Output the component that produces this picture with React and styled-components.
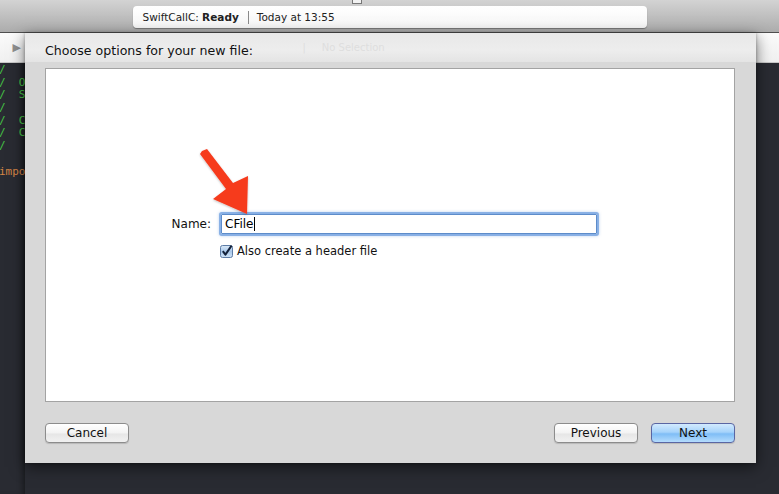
import React from 'react';
import styled, { createGlobalStyle } from 'styled-components';

const GlobalStyle = createGlobalStyle`
  html, body {
    margin: 0;
    padding: 0;
    background: #292b32;
  }
  body {
    font-family: "Lucida Grande", "DejaVu Sans", sans-serif;
    -webkit-font-smoothing: antialiased;
  }
`;

const Page = styled.div`
  width: 779px;
  height: 494px;
  overflow: hidden;
  display: flex;
  flex-direction: column;
  background: #292b32;
`;

const Toolbar = styled.div`
  position: relative;
  height: 33px;
  border-bottom: 1px solid #4f4f4f;
  background: linear-gradient(#d3d3d3, #acacac);
  display: flex;
  justify-content: center;
  padding-top: 6px;
  box-sizing: border-box;
`;

const Notch = styled.div`
  position: absolute;
  left: 352px;
  top: -1px;
  width: 8px;
  height: 3px;
  background: #f2f2f2;
  border: 1px solid #777;
`;

const StatusPill = styled.div`
  width: 514px;
  height: 22px;
  box-sizing: border-box;
  padding: 0 10px;
  border-radius: 4px;
  background: linear-gradient(#ffffff, #f6f6f6);
  box-shadow: 0 1px 1px rgba(0, 0, 0, 0.35);
  display: flex;
  align-items: center;
  font-size: 10.5px;
  color: #222;
  white-space: pre;
`;

const Strong = styled.b`
  font-weight: bold;
`;

const Divider = styled.span`
  width: 1px;
  height: 13px;
  background: #8a8a8a;
  margin: 0 8px 0 9px;
`;

const Workspace = styled.div`
  flex: 1;
  display: grid;
  grid-template-columns: 25px 731px 1fr;
  align-items: start;
`;

const Gutter = styled.div`
  display: flex;
  flex-direction: column;
  height: 100%;
  overflow: hidden;
`;

const JumpStrip = styled.div`
  height: 29px;
  flex: none;
  background: linear-gradient(#fbfbfb, #f0f0f0);
  border-bottom: 1px solid #c8c8c8;
  display: flex;
  align-items: center;
  justify-content: flex-end;
  padding-right: 4px;
  color: #8f8f8f;
  font-size: 11px;
`;

const Code = styled.div`
  flex: 1;
  font-family: "DejaVu Sans Mono", monospace;
  font-size: 11px;
  line-height: 12.7px;
  white-space: pre;
  padding-top: 1px;
  margin-left: -1px;
  box-shadow: inset -6px 0 6px -4px rgba(0, 0, 0, 0.45);
`;

const CodeLine = styled.div`
  height: 12.7px;
  color: ${(p) => (p.$tone === 'keyword' ? '#d48545' : '#45c245')};
`;

const Sheet = styled.div`
  display: flex;
  flex-direction: column;
  background: #d8d8d8;
  box-shadow: 0 4px 14px rgba(0, 0, 0, 0.55), 0 0 3px rgba(0, 0, 0, 0.3);
  position: relative;
  z-index: 1;
`;

const SheetHeader = styled.div`
  position: relative;
  height: 29px;
  box-sizing: border-box;
  padding: 10px 0 0 20px;
  background: linear-gradient(#e8e8e8, #ededed 60%, #e4e4e4);
  font-size: 12.6px;
  color: #111;
`;

const GhostPath = styled.span`
  position: absolute;
  left: 268px;
  top: 9px;
  font-size: 10px;
  color: #dedede;
  white-space: pre;
`;

const Title = styled.span`
  position: relative;
`;

const Canvas = styled.div`
  position: relative;
  margin: 6px 21px 0 20px;
  height: 334px;
  box-sizing: border-box;
  background: #fff;
  border: 1px solid #a3a3a3;
`;

const Form = styled.div`
  display: grid;
  grid-template-columns: 165px 376px;
  column-gap: 10px;
  row-gap: 10px;
  padding-top: 145px;
  align-items: center;
`;

const FieldLabel = styled.label`
  text-align: right;
  font-size: 12px;
  color: #111;
`;

const TextField = styled.div`
  height: 20px;
  box-sizing: border-box;
  border: 1px solid #5d8cca;
  box-shadow: 0 0 0 2px rgba(120, 165, 225, 0.8), 0 0 3px 2px rgba(120, 165, 225, 0.5);
  border-radius: 1px;
  display: flex;
  align-items: center;
  padding-left: 3px;
  font-size: 12px;
  color: #000;
`;

const Caret = styled.span`
  display: inline-block;
  width: 1px;
  height: 14px;
  background: #000;
  margin-left: 1px;
`;

const CheckRow = styled.div`
  grid-column: 2;
  display: flex;
  align-items: center;
  gap: 4px;
  font-size: 11.5px;
  color: #111;
  margin-left: -1px;
`;

const ArrowLayer = styled.svg`
  position: absolute;
  left: 0;
  top: 0;
  width: 100%;
  height: 100%;
  pointer-events: none;
`;

const Footer = styled.div`
  display: flex;
  align-items: center;
  padding: 21px 21px 20px 20px;
  gap: 13px;
`;

const Spacer = styled.div`
  flex: 1;
`;

const Button = styled.button`
  width: 84px;
  height: 20px;
  padding: 0;
  border-radius: 4px;
  font-family: inherit;
  font-size: 12px;
  color: #111;
  border: 1px solid ${(p) => (p.$primary ? '#5a66a3' : '#8c8c8c')};
  background: ${(p) =>
    p.$primary
      ? 'linear-gradient(#d2eafe, #a6d3fb 45%, #7fbdf6 55%, #b4dcfd)'
      : 'linear-gradient(#ffffff, #f3f3f3 50%, #e6e6e6 55%, #f1f1f1)'};
  box-shadow: 0 1px 1px rgba(0, 0, 0, 0.15);
`;

const Checkbox = () => (
  <svg width="13" height="13" viewBox="0 0 13 13">
    <defs>
      <linearGradient id="cb" x1="0" y1="0" x2="0" y2="1">
        <stop offset="0" stopColor="#dceaf8" />
        <stop offset="0.5" stopColor="#a9c8ea" />
        <stop offset="1" stopColor="#cfe3f7" />
      </linearGradient>
    </defs>
    <rect x="0.5" y="0.5" width="12" height="12" rx="2" fill="url(#cb)" stroke="#5d7ca6" />
    <path d="M2.8 6.2 L5.4 9.6 L11.6 0.6" fill="none" stroke="#13213a" strokeWidth="2" strokeLinejoin="round" />
  </svg>
);

const codeLines = [
  { text: '/' },
  { text: '/  O' },
  { text: '/  S' },
  { text: '/' },
  { text: '/  C' },
  { text: '/  C' },
  { text: '/' },
  { text: '' },
  { text: 'impo', tone: 'keyword' },
];

// arrow in canvas coordinates (page minus 46,70)
const arrowPoints = [
  [202, 152], [207, 150], [233, 184], [248, 177], [247, 215], [213, 200], [226, 190], [200, 155],
]
  .map(([x, y]) => `${x - 46},${y - 70}`)
  .join(' ');

export default function App() {
  return (
    <>
      <GlobalStyle />
      <Page>
        <Toolbar>
          <Notch />
          <StatusPill>
            SwiftCallC: <Strong>Ready</Strong>
            <Divider />
            Today at 13:55
          </StatusPill>
        </Toolbar>

        <Workspace>
          <Gutter>
            <JumpStrip>▶</JumpStrip>
            <Code>
              {codeLines.map((line, i) => (
                <CodeLine key={i} $tone={line.tone}>{line.text}</CodeLine>
              ))}
            </Code>
          </Gutter>

          <Sheet>
            <SheetHeader>
              <GhostPath>   |     No Selection</GhostPath>
              <Title>Choose options for your new file:</Title>
            </SheetHeader>
            <Canvas>
              <Form>
                <FieldLabel>Name:</FieldLabel>
                <TextField>
                  CFile<Caret />
                </TextField>
                <CheckRow>
                  <Checkbox />
                  Also create a header file
                </CheckRow>
              </Form>
              <ArrowLayer>
                <defs>
                  <filter id="sh" x="-20%" y="-20%" width="140%" height="140%">
                    <feDropShadow dx="0" dy="1" stdDeviation="0.8" floodColor="#000" floodOpacity="0.25" />
                  </filter>
                </defs>
                <polygon points={arrowPoints} fill="#f63b1e" filter="url(#sh)" strokeLinejoin="round" />
              </ArrowLayer>
            </Canvas>
            <Footer>
              <Button>Cancel</Button>
              <Spacer />
              <Button>Previous</Button>
              <Button $primary>Next</Button>
            </Footer>
          </Sheet>

          <Gutter>
            <JumpStrip />
          </Gutter>
        </Workspace>
      </Page>
    </>
  );
}
